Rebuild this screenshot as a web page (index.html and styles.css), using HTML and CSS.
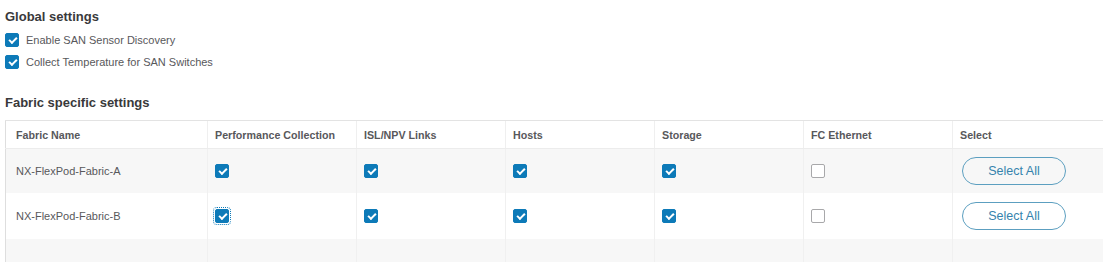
FILE: index.html
```html
<!DOCTYPE html>
<html lang="en">
<head>
    <meta charset="UTF-8">
    <title>SAN Settings</title>
    <link rel="stylesheet" href="styles.css">
</head>
<body>
    <div class="page">
        <h2 class="section-title">Global settings</h2>
        <label class="check-row"><span class="box checked"></span>Enable SAN Sensor Discovery</label>
        <label class="check-row"><span class="box checked"></span>Collect Temperature for SAN Switches</label>

        <h2 class="section-title fabric-title">Fabric specific settings</h2>
        <table class="fabric-table">
            <colgroup>
                <col class="c-name">
                <col class="c-std"><col class="c-std"><col class="c-std"><col class="c-std"><col class="c-std">
                <col class="c-select">
            </colgroup>
            <thead>
                <tr>
                    <th>Fabric Name</th>
                    <th>Performance Collection</th>
                    <th>ISL/NPV Links</th>
                    <th>Hosts</th>
                    <th>Storage</th>
                    <th>FC Ethernet</th>
                    <th>Select</th>
                </tr>
            </thead>
            <tbody>
                <tr class="odd">
                    <td>NX-FlexPod-Fabric-A</td>
                    <td><span class="box checked"></span></td>
                    <td><span class="box checked"></span></td>
                    <td><span class="box checked"></span></td>
                    <td><span class="box checked"></span></td>
                    <td><span class="box"></span></td>
                    <td><button class="pill">Select All</button></td>
                </tr>
                <tr class="even">
                    <td>NX-FlexPod-Fabric-B</td>
                    <td><span class="box checked focus"></span></td>
                    <td><span class="box checked"></span></td>
                    <td><span class="box checked"></span></td>
                    <td><span class="box checked"></span></td>
                    <td><span class="box"></span></td>
                    <td><button class="pill">Select All</button></td>
                </tr>
                <tr class="odd filler">
                    <td></td><td></td><td></td><td></td><td></td><td></td><td></td>
                </tr>
            </tbody>
        </table>
    </div>
</body>
</html>
```

FILE: styles.css
```css
html, body {
    margin: 0;
    padding: 0;
    background: #fff;
    overflow: hidden;
}
body {
    font-family: 'Liberation Sans', Arial, sans-serif;
    color: #58585b;
    width: 1103px;
    height: 262px;
}
.page {
    padding: 9px 0 0 5px;
}
.section-title {
    margin: 0 0 8px 0;
    font-size: 13px;
    font-weight: bold;
    color: #39393b;
    line-height: 16px;
}
.fabric-title {
    margin-top: 26px;
    margin-bottom: 9px;
}
.check-row {
    display: flex;
    align-items: center;
    gap: 7px;
    font-size: 11px;
    color: #58585b;
    height: 14px;
    margin-bottom: 8px;
}
.box {
    display: inline-block;
    box-sizing: border-box;
    width: 14px;
    height: 14px;
    border: 1px solid #a8a8aa;
    border-radius: 2px;
    background: #fff;
    vertical-align: middle;
    position: relative;
}
.box.checked {
    background: #0d7ab8;
    border-color: #0d7ab8;
}
.box.checked::after {
    content: "";
    position: absolute;
    left: 3px;
    top: 3px;
    width: 6px;
    height: 3px;
    border-left: 2px solid #fff;
    border-bottom: 2px solid #fff;
    transform: rotate(-45deg);
}
.box.focus {
    outline: 1px dotted #0d7ab8;
    outline-offset: 1px;
}
.fabric-table {
    table-layout: fixed;
    border-collapse: collapse;
    width: 1140px;
    font-size: 11px;
}
.c-name { width: 202px; }
.c-std { width: 149px; }
.c-select { width: 193px; }
.fabric-table th {
    text-align: left;
    font-weight: bold;
    font-size: 10.7px;
    color: #58585b;
    height: 27px;
    padding: 0 0 0 7px;
    border-top: 1px solid #e3e3e3;
    border-left: 1px solid #efefef;
    border-bottom: 1px solid #ececec;
}
.fabric-table th:first-child {
    padding-left: 10px;
    border-left: 1px solid #dedede;
}
.fabric-table td {
    padding: 0 0 0 7px;
    border-left: 1px solid #f0f0f0;
    color: #58585b;
}
.fabric-table td:first-child {
    padding-left: 10px;
    border-left: 1px solid #dedede;
}
.fabric-table tr.odd td {
    background: #f7f7f7;
    height: 44px;
}
.fabric-table tr.even td {
    background: #fff;
    height: 46px;
}
.fabric-table tr.filler td {
    height: 30px;
}
.pill {
    font-family: 'Liberation Sans', Arial, sans-serif;
    font-size: 12.5px;
    color: #3583ad;
    background: transparent;
    border: 1px solid #5c9fc0;
    border-radius: 14px;
    width: 104px;
    height: 28px;
    margin-left: 2px;
    cursor: pointer;
}
```
